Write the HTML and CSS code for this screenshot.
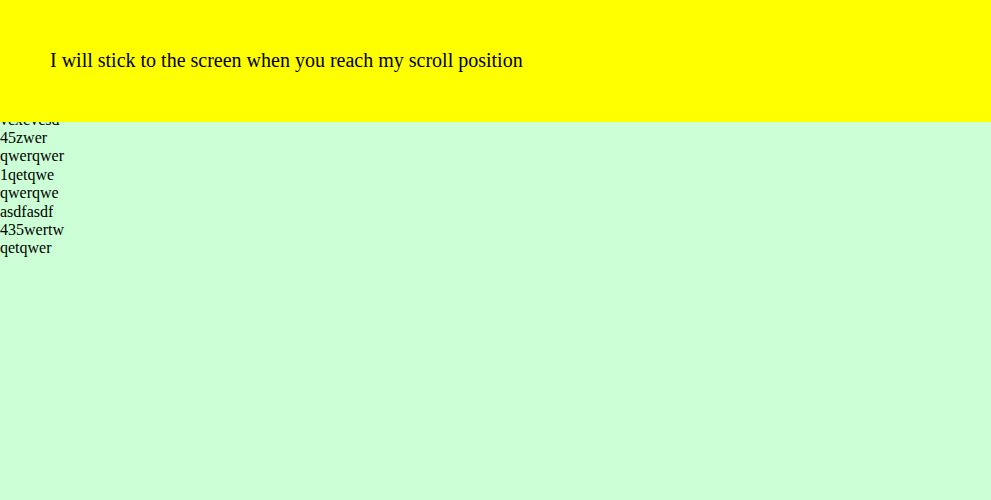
FILE: index.html
```html
<!DOCTYPE html>
<html>
<head>
<meta charset="utf-8">
<link rel="stylesheet" href="styles.css">
</head>
<body>
<div class="sticky">I will stick to the screen when you reach my scroll position</div>
<div class="list">
<div>vcxcvcsd</div>
<div>45zwer</div>
<div>qwerqwer</div>
<div>1qetqwe</div>
<div>qwerqwe</div>
<div>asdfasdf</div>
<div>435wertw</div>
<div>qetqwer</div>
</div>
</body>
</html>
```
FILE: styles.css
```css
html, body {
  margin: 0;
  height: 100%;
}
body {
  background: #ccffd6;
  font-family: "Liberation Serif", "Times New Roman", serif;
  font-size: 16px;
  line-height: 18.4px;
  color: #000;
}
.sticky {
  position: relative;
  z-index: 1;
  background: #ffff00;
  padding: 49px 50px 50px;
  font-size: 20px;
  line-height: 23px;
  height: 23px;
}
.list {
  margin-top: -11.5px;
}
```
